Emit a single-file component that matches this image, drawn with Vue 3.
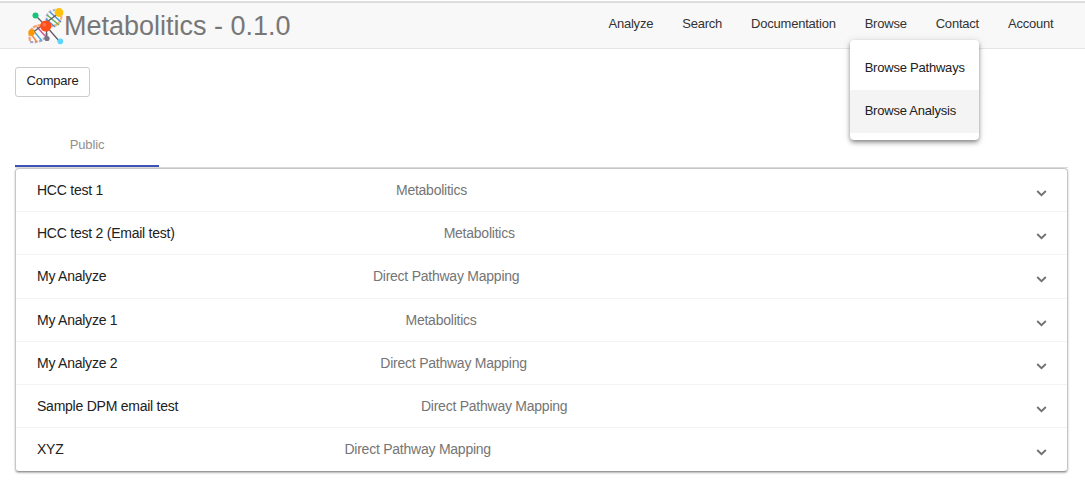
<script setup>
const nav = ['Analyze', 'Search', 'Documentation', 'Browse', 'Contact', 'Account']
const rows = [
  ['HCC test 1', 'Metabolitics'],
  ['HCC test 2 (Email test)', 'Metabolitics'],
  ['My Analyze', 'Direct Pathway Mapping'],
  ['My Analyze 1', 'Metabolitics'],
  ['My Analyze 2', 'Direct Pathway Mapping'],
  ['Sample DPM email test', 'Direct Pathway Mapping'],
  ['XYZ', 'Direct Pathway Mapping'],
]
</script>

<template>
  <div class="page">
    <header class="bar">
      <div class="brand">
        <svg class="logo" width="36" height="37" viewBox="0 0 36 37" fill="none">
          <path d="M2 33C0 22 5 17 15 17" stroke="#f7a06a" stroke-width="2.2" stroke-dasharray="4 .8" />
          <path d="M19 13C17 5 22 2 31 1.5" stroke="#b9b6d2" stroke-width="2.2" stroke-dasharray="3 1.5" />
          <path d="M2 34C13 35 19 31 19 22" stroke="#aaa8ca" stroke-width="2.2" stroke-dasharray="3 1.5" />
          <path d="M21 18C30 19 34 13 33.5 5" stroke="#f5b476" stroke-width="2.2" stroke-dasharray="4 .8" />
          <path d="M22 4L33 14" stroke="#4a91d9" stroke-width="1.5" />
          <path d="M19 7L31 17" stroke="#66b35c" stroke-width="1.6" />
          <path d="M18 11L27 19" stroke="#4a91d9" stroke-width="1.5" />
          <path d="M3 26L9 34" stroke="#ef8b4a" stroke-width="1.5" />
          <path d="M5 22L14 33" stroke="#4fa6d8" stroke-width="1.5" />
          <path d="M9 19L18 29" stroke="#c85a9a" stroke-width="1.5" />
          <path d="M8 8L18 18L32 34M4 25L31 5M18 18L19 31" stroke="#625b66" stroke-width="1.3" />
          <circle cx="7.5" cy="7.5" r="3" fill="#16c47b" />
          <circle cx="31" cy="4.5" r="4.4" fill="#ffc20a" />
          <circle cx="3.5" cy="24.5" r="3.2" fill="#ff9800" />
          <circle cx="19" cy="30.5" r="2.6" fill="#777382" />
          <circle cx="32.3" cy="33.3" r="2.9" fill="#5bd6fa" />
          <circle cx="17.8" cy="18" r="5.6" fill="#ff4d17" />
          <circle cx="16.5" cy="16.7" r="1.8" fill="#ff7650" />
        </svg>
        <span class="title">Metabolitics - 0.1.0</span>
      </div>
      <nav class="nav">
        <div v-for="n in nav" :key="n" class="item">
          <span>{{ n }}</span>
          <div v-if="n === 'Browse'" class="menu">
            <div class="option">Browse Pathways</div>
            <div class="option active">Browse Analysis</div>
          </div>
        </div>
      </nav>
    </header>
    <main class="content">
      <button class="compare">Compare</button>
      <div class="tabs"><div class="tab">Public</div></div>
      <div class="panels">
        <div v-for="r in rows" :key="r[0]" class="row">
          <span class="name">{{ r[0] }}</span>
          <span class="method">{{ r[1] }}</span>
          <svg class="chevron" width="11" height="7" viewBox="0 0 11 7"><path d="M1.2 1L5.5 5.2L9.8 1" fill="none" stroke="#707070" stroke-width="1.8" /></svg>
        </div>
      </div>
    </main>
  </div>
</template>

<style>
body { background: #fff; overflow: hidden; }
</style>

<style scoped>
.page { height: 487px; box-sizing: border-box; padding-top: 1px; font-family: "Liberation Sans", Arial, sans-serif; color: #212121; }
.bar { height: 48px; box-sizing: border-box; border-top: 2px solid #dcdedd; border-bottom: 1px solid #e5e5e5; background: #f8f8f8; display: flex; justify-content: space-between; padding: 0 31.6px 0 28px; }
.brand { display: flex; padding-top: 5px; }
.logo { flex: none; }
.title { font-size: 27px; line-height: 37px; color: #777; white-space: nowrap; }
.nav { display: flex; gap: 29px; font-size: 13px; letter-spacing: -0.22px; line-height: 20px; padding-top: 11px; color: #333; }
.item { position: relative; white-space: nowrap; }
.menu { position: absolute; left: -14.6px; top: 26px; width: 129px; height: 100px; box-sizing: border-box; padding-top: 7px; border-radius: 4px; background: #fff; color: #212121; box-shadow: 0 2px 4px -1px rgba(0,0,0,.35), 0 3px 5px rgba(0,0,0,.2), 0 1px 8px rgba(0,0,0,.12); }
.option { height: 43px; line-height: 41px; padding-left: 14.6px; }
.option.active { background: #f4f4f4; }
.content { padding: 18px 17px 0 15px; }
.compare { display: block; width: 75px; height: 30px; padding: 0 0 4px; border: 1px solid #ccc; border-radius: 3px; background: #fff; font: 13px "Liberation Sans", Arial, sans-serif; letter-spacing: -0.21px; color: #212121; }
.tabs { margin-top: 26px; height: 45px; box-sizing: border-box; border-bottom: 1px solid #dedede; display: flex; }
.tab { width: 144px; height: 44px; box-sizing: border-box; border-bottom: 2px solid #3f51b5; text-align: center; font-size: 13px; letter-spacing: -0.15px; line-height: 43px; color: #909090; }
.panels { height: 304px; box-sizing: border-box; border: 1px solid #c6c6c6; border-bottom-color: #999; border-radius: 4px; box-shadow: 0 1px 2px rgba(0,0,0,.3); }
.row { height: 43.2px; box-sizing: border-box; display: flex; align-items: center; padding: 0 20px 0 21px; font-size: 14px; letter-spacing: -0.24px; border-bottom: 1px solid #f3f3f3; white-space: nowrap; }
.row:last-child { border-bottom-color: transparent; }
.name { flex: 1 0 auto; margin-right: 15.2px; }
.method { flex: 2 0 auto; margin-right: 13.6px; color: #757575; }
.chevron { flex: none; position: relative; top: 3.35px; }
</style>
